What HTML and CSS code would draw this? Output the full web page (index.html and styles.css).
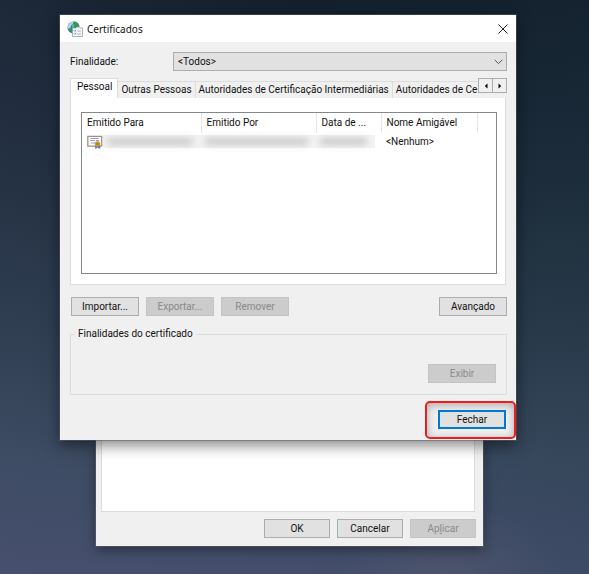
FILE: index.html
```html
<!DOCTYPE html>
<html lang="pt-BR">
<head>
<meta charset="utf-8">
<meta name="viewport" content="width=device-width, initial-scale=1">
<title>Certificados</title>
<link rel="stylesheet" href="styles.css">
</head>
<body>
<main class="desktop">
  <section class="window dialog" aria-labelledby="dialog-title">
    <header class="titlebar">
      <svg class="app-icon" viewBox="0 0 16 16" aria-hidden="true">
        <circle cx="6.500" cy="6.500" r="6" fill="#2f78b8"/>
        <path d="M.8 5c1-3 3.500-4.500 5.700-4.500L6 3 4 4.500 3.500 7 1 8z" fill="#a9d6ee"/>
        <path d="M7 .6c3 0 5 2 5.500 5H9L7 4.500zM2.500 7l3 1 .5 4.500C4 12 2 10 1.500 8z" fill="#37984a"/>
        <path d="M4.500 4l2-1 1 2-2 2z" fill="#63c06a"/>
        <path d="M5.500 7h3.500l1-1h2.500l.5 1h2.500v8.500h-10z" fill="#f4f6f8" stroke="#9aa5ad" stroke-width=".8"/>
        <path d="M7 9.500l.8.800L9 8.800M7 12.500l.8.800L9 11.800" fill="none" stroke="#3b7fb8" stroke-width=".9"/>
        <path d="M10 10h4M10 13h4" stroke="#a5b0b9" stroke-width=".9"/>
      </svg>
      <h1 class="title" id="dialog-title">Certificados</h1>
      <button class="close" type="button" aria-label="Fechar janela">
        <svg viewBox="0 0 10 10" aria-hidden="true"><path d="M.5.5l9 9M9.500.5l-9 9" fill="none" stroke="#222"/></svg>
      </button>
    </header>

    <div class="dialog-body">
      <div class="purpose">
        <label for="purpose">Finalidade:</label>
        <div class="combo">
          <select id="purpose"><option>&lt;Todos&gt;</option></select>
          <svg class="chevron" viewBox="0 0 9 6" aria-hidden="true"><path d="M.7.800l3.800 3.800L8.300.800" fill="none" stroke="#555"/></svg>
        </div>
      </div>

      <div class="tabs">
        <div class="tablist" role="tablist">
          <button class="tab selected" type="button" role="tab" aria-selected="true">Pessoal</button>
          <button class="tab" type="button" role="tab">Outras Pessoas</button>
          <button class="tab" type="button" role="tab">Autoridades de Certificação Intermediárias</button>
          <button class="tab last" type="button" role="tab">Autoridades de Ce</button>
        </div>
        <div class="spinner">
          <button type="button" aria-label="Guias anteriores"><svg viewBox="0 0 4 6" aria-hidden="true"><path d="M3.500.5v5L.8 3z"/></svg></button>
          <button type="button" aria-label="Próximas guias"><svg viewBox="0 0 4 6" aria-hidden="true"><path d="M.5.5v5L3.200 3z"/></svg></button>
        </div>
      </div>

      <div class="panel" role="tabpanel">
        <div class="list">
          <table>
            <colgroup><col class="col-to"><col class="col-by"><col class="col-date"><col class="col-name"><col></colgroup>
            <thead>
              <tr><th>Emitido Para</th><th>Emitido Por</th><th>Data de ...</th><th>Nome Amigável</th><th></th></tr>
            </thead>
            <tbody>
              <tr>
                <td class="cert">
                  <svg class="cert-icon" viewBox="0 0 16 14" aria-hidden="true">
                    <path d="M.8 1.300h13.900v9.900H.8z" fill="#fcfcfd" stroke="#a1937f" stroke-width="1.300"/>
                    <path d="M3.500 3.500h8M3 5.500h5M9 5.500h3M4 8h4" stroke="#8b96d0" stroke-width=".9"/>
                    <path d="M8.200 10v4l1.800-1 .5.5V10zM11 10v3.500l.8-.5 1.400 1V10z" fill="#3f78d2"/>
                    <circle cx="10.500" cy="9" r="2.700" fill="#d59a18"/>
                    <circle cx="10.500" cy="9" r="1.200" fill="#b87c08"/>
                  </svg>
                  <span class="redacted"><i></i></span>
                </td>
                <td><span class="redacted"><i></i></span></td>
                <td class="short"><span class="redacted"><i></i></span></td>
                <td>&lt;Nenhum&gt;</td>
                <td></td>
              </tr>
            </tbody>
          </table>
        </div>
      </div>

      <div class="actions">
        <button class="btn" type="button">Importar...</button>
        <button class="btn" type="button" disabled>Exportar...</button>
        <button class="btn" type="button" disabled>Remover</button>
        <button class="btn push" type="button">Avançado</button>
      </div>

      <fieldset class="group">
        <legend>Finalidades do certificado</legend>
        <button class="btn" type="button" disabled>Exibir</button>
      </fieldset>

      <footer class="dialog-footer">
        <div class="highlight"><button class="btn default" type="button">Fechar</button></div>
      </footer>
    </div>
  </section>

  <section class="window parent" aria-label="Propriedades">
    <div class="page"></div>
    <div class="parent-actions">
      <button class="btn" type="button">OK</button>
      <button class="btn" type="button">Cancelar</button>
      <button class="btn" type="button" disabled>Ap<u>l</u>icar</button>
    </div>
  </section>
</main>
</body>
</html>
```

FILE: styles.css
```css
* {
  box-sizing: border-box;
}

body {
  margin: 0;
  font: 10px/14px Roboto, "Liberation Sans", sans-serif;
  color: #111;
}

button,
select {
  font: inherit;
  color: inherit;
  margin: 0;
  padding: 0;
  border: 0;
  border-radius: 0;
}

svg {
  display: block;
}

.desktop {
  min-height: 100vh;
  padding: 15px 73px 28px 60px;
  background:
    radial-gradient(ellipse 110px 70px at 76% 100%, rgba(110, 105, 120, .25), transparent),
    linear-gradient(90deg, rgba(80, 85, 120, .15), transparent 50%, rgba(20, 50, 60, .15)),
    linear-gradient(#14202d, #1d2b3a 30%, #2b3b4c 58%, #3b4a60 80%, #454f6d);
}

.window {
  background: #f0f0f0;
}

.dialog {
  position: relative;
  z-index: 1;
  box-shadow: 0 0 0 1px rgba(90, 95, 100, .5), 0 5px 14px rgba(0, 0, 0, .5);
}

.titlebar {
  display: flex;
  align-items: center;
  height: 27px;
  padding: 0 8px 0 7px;
  background: #fff;
}

.app-icon {
  width: 16px;
  height: 16px;
  margin-right: 4px;
}

.title {
  margin: 0;
  font-family: "Noto Sans", sans-serif;
  font-size: 10px;
  font-weight: 400;
}

.close {
  margin-left: auto;
  background: none;
}

.close svg {
  width: 10px;
  height: 10px;
}

.dialog-body {
  padding: 10px 9px 0 10px;
}

.purpose {
  display: grid;
  grid-template-columns: 103px 1fr;
  align-items: center;
}

.combo {
  display: grid;
  align-items: center;
}

.combo > * {
  grid-area: 1 / 1;
}

.combo select {
  appearance: none;
  width: 100%;
  height: 19px;
  padding: 0 20px 0 4px;
  border: 1px solid #adadad;
  background: #e1e1e1;
}

.chevron {
  justify-self: end;
  width: 9px;
  height: 6px;
  margin-right: 4px;
  pointer-events: none;
}

.tabs {
  display: flex;
  align-items: flex-end;
  height: 27px;
  padding-top: 7px;
}

.tablist {
  flex: 1;
  min-width: 0;
  display: flex;
  align-items: flex-end;
  overflow: hidden;
}

.tab {
  flex: none;
  height: 17px;
  padding: 0 3px;
  border: 1px solid #dcdcdc;
  border-width: 1px 1px 0 0;
  background: #f0f0f0;
  white-space: nowrap;
}

.tab.selected {
  height: 20px;
  padding: 0 5px 3px 6px;
  border-left-width: 1px;
  background: #fff;
}

.tab.last {
  flex: 1;
  padding-right: 0;
  border-right: 0;
  text-align: left;
}

.spinner {
  display: flex;
  align-self: flex-start;
}

.spinner button {
  display: grid;
  place-items: center;
  width: 15px;
  height: 15px;
  border: 1px solid #adadad;
  background: #f0f0f0;
}

.spinner button + button {
  margin-left: -1px;
}

.spinner svg {
  width: 4px;
  height: 6px;
}

.panel {
  margin-right: 1px;
  padding: 14px 8px 10px 10px;
  border: 1px solid #dcdcdc;
  border-top: 0;
  background: #fff;
}

.list {
  min-height: 162px;
  border: 1px solid #828790;
}

table {
  width: 100%;
  table-layout: fixed;
  border-collapse: collapse;
}

.col-to { width: 119px; }
.col-by { width: 115px; }
.col-date { width: 65px; }
.col-name { width: 96px; }

th,
td {
  padding: 0 0 0 5px;
  font-weight: 400;
  text-align: left;
  white-space: nowrap;
}

th {
  height: 20px;
  border-right: 1px solid #e5e5e5;
}

th:last-child {
  border-right: 0;
}

td {
  height: 17px;
}

.cert {
  display: flex;
  align-items: center;
}

.cert-icon {
  flex: none;
  width: 16px;
  height: 14px;
}

.redacted {
  flex: 1;
  display: block;
  height: 13px;
  padding: 3px 8px 3px 4px;
  background: #f2f2f2;
}

.redacted i {
  display: block;
  height: 7px;
  border-radius: 3px;
  background: #cbcbcb;
  filter: blur(3px);
}

td:nth-child(2),
td:nth-child(3) {
  padding-left: 0;
}

.short .redacted {
  margin-right: 6px;
}

.actions {
  display: flex;
  gap: 7px;
  padding: 12px 0 0 1px;
}

.btn {
  width: 68px;
  height: 19px;
  border: 1px solid #adadad;
  background: #e1e1e1;
}

.btn:disabled {
  border-color: #c4c4c4;
  background: #ccc;
  color: #8a8a8a;
}

.push {
  margin-left: auto;
}

.group {
  display: flex;
  justify-content: flex-end;
  min-width: 0;
  margin: 11px 0 0;
  padding: 23px 10px 11px 4px;
  border: 1px solid #dcdcdc;
}

legend {
  padding: 0 3px;
}

.dialog-footer {
  display: flex;
  justify-content: flex-end;
  margin-right: -9px;
  padding: 6px 0 1px;
}

.highlight {
  padding: 7px 8px 8px 11px;
  border: 2px solid #ee1c1c;
  border-radius: 5px;
  box-shadow: inset 0 2px 8px rgba(0, 0, 0, .3);
}

.default {
  display: block;
  border: 2px solid #0078d7;
}

.parent {
  margin: 0 33px 0 36px;
  padding: 0 7px 8px 5px;
  box-shadow: 0 0 0 1px rgba(110, 115, 120, .4), 0 4px 12px rgba(0, 0, 0, .4);
}

.page {
  height: 72px;
  margin-right: 1px;
  border: 1px solid #dcdcdc;
  border-top: 0;
  background: #fff;
}

.parent-actions {
  display: flex;
  justify-content: flex-end;
  gap: 7px;
  padding-top: 7px;
}

.parent-actions .btn {
  width: 66px;
}
```
